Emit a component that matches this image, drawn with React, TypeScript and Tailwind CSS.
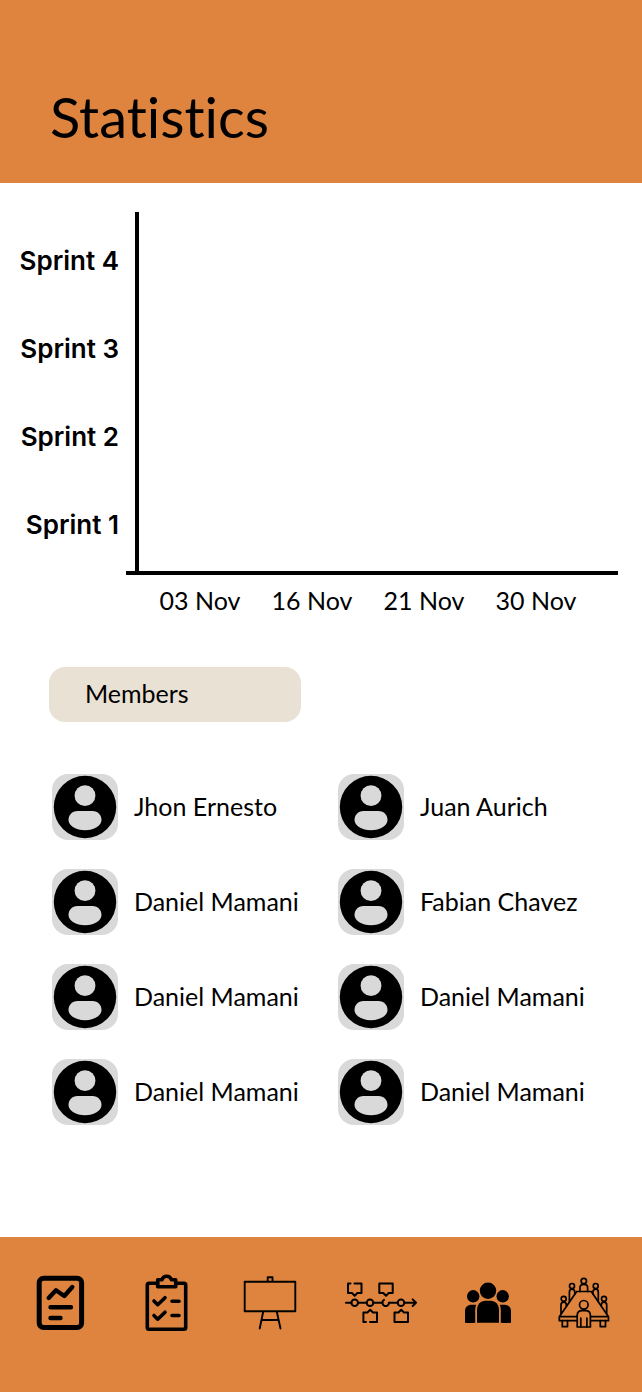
import type { ReactNode } from 'react';

const sprints = ['Sprint 4', 'Sprint 3', 'Sprint 2', 'Sprint 1'];
const dates = ['03 Nov', '16 Nov', '21 Nov', '30 Nov'];
const members = [
  'Jhon Ernesto',
  'Juan Aurich',
  'Daniel Mamani',
  'Fabian Chavez',
  'Daniel Mamani',
  'Daniel Mamani',
  'Daniel Mamani',
  'Daniel Mamani',
];

function Avatar() {
  return (
    <span className="block size-[66px] shrink-0 rounded-2xl bg-[#d9d9d9]">
      <svg viewBox="0 0 66 66" className="size-full" aria-hidden="true">
        <circle cx="33" cy="33" r="31.2" fill="#000" />
        <circle cx="33" cy="21.7" r="10.4" fill="#d9d9d9" />
        <path d="M25.500 37H40.500C46 37 49.500 41 49.500 46C49.500 51.500 42 56.200 33 56.200S16.500 51.500 16.500 46C16.500 41 20 37 25.500 37Z" fill="#d9d9d9" />
      </svg>
    </span>
  );
}

function Glyph({ width = 60, stroke, children }: { width?: number; stroke: number; children: ReactNode }) {
  return (
    <svg
      width={width}
      height={60}
      viewBox={`0 0 ${width} 60`}
      fill="none"
      stroke="#000"
      strokeWidth={stroke}
      strokeLinecap="round"
      strokeLinejoin="round"
      aria-hidden="true"
    >
      {children}
    </svg>
  );
}

function ReportIcon() {
  return (
    <Glyph stroke={4.4}>
      <rect x="9.200" y="5.200" width="42.400" height="49.400" rx="4.500" strokeWidth="5" />
      <path d="M18.700 25L26 17.300L34.300 23L42.300 14M20.500 34.300H41M20.500 45H30.500" />
    </Glyph>
  );
}

function ChecklistIcon() {
  return (
    <Glyph stroke={3.6}>
      <path d="M21.700 10.300H13Q11.300 10.300 11.300 12V54.500Q11.300 56.300 13 56.300H48Q49.700 56.300 49.700 54.500V12Q49.700 10.300 48 10.300H39.700" />
      <path d="M21.700 13.700V6.700H26C26.700 4.300 28.300 3.200 30.700 3.200S34.700 4.300 35.400 6.700H39.700V13.700Z" />
      <path d="M18 28L21.700 31.700L29 24.700M18 42.500L21.700 46.200L29 39.200M36 28.300H43M36 42.500H43" />
    </Glyph>
  );
}

function BoardIcon() {
  return (
    <Glyph stroke={1.9}>
      <path d="M4.700 8.700H55.300V38.300H4.700ZM27.700 8.700V4.300H32.500V8.700M23.300 38.300L19.700 55.500M36.700 38.300L40.500 55.500M22 47H38.500" />
    </Glyph>
  );
}

function TimelineIcon() {
  return (
    <Glyph width={72} stroke={2}>
      <path d="M0.900 29.700H6.400M13 29.700H21.700M28.300 29.700H37.400M44 29.700H52.700M59.300 29.700H71M67.700 26.400L71 29.700L67.700 33" />
      <circle cx="9.700" cy="29.700" r="3.300" />
      <circle cx="25" cy="29.700" r="3.300" />
      <circle cx="56" cy="29.700" r="3.300" />
      <path d="M39 26.900A3.300 3.300 0 1 0 44 29.700" />
      <path d="M5.500 10.500H3V20H7L9.700 22.700L12.400 20H16.500V10.500H9.500" />
      <path d="M34.300 10.500H47.700V20H43.700L41 22.700L38.300 20H34.300Z" />
      <path d="M21 49H18.400V39.500H22.400L25.200 36.800L28 39.500H32V49H25" />
      <path d="M49.500 49V39.500H53.500L56.200 36.800L59 39.500H63V49Z" />
    </Glyph>
  );
}

function TeamIcon() {
  return (
    <Glyph stroke={0}>
      <g fill="#000">
        <circle cx="30" cy="17.800" r="8.200" />
        <circle cx="15.200" cy="23.300" r="6.200" />
        <circle cx="44.700" cy="23.300" r="6.200" />
        <path d="M19 49.700V37C19 31.500 22.500 27.700 27.500 27.700H32.500C37.500 27.700 41 31.500 41 37V49.700Z" />
        <path d="M7 49.700V38C7 34 9.700 31.700 13.500 31.700H18.200Q17.200 34 17.200 37V49.700Q12 50.200 7 49.700Z" />
        <path d="M53 49.700V38C53 34 50.300 31.700 46.500 31.700H41.800Q42.800 34 42.800 37V49.700Q48 50.200 53 49.700Z" />
      </g>
    </Glyph>
  );
}

function MeetingIcon() {
  return (
    <Glyph stroke={1.7}>
      <path d="M22.700 18.500H37.300L54.500 43.700V47.700H5.300V43.700ZM5.300 43.700H54.500" />
      <path d="M8.300 47.700V53.700H13.500V47.700M46.300 47.700V53.700H51.500V47.700" />
      <circle cx="29.800" cy="8" r="2.700" />
      <path d="M26 18.500V14.500Q26 11.300 29.800 11.300T33.600 14.500V18.500" />
      <circle cx="18" cy="13" r="2.500" />
      <path d="M15.400 28.500V19Q15.400 16.200 18 16.200T20.800 19V21" />
      <circle cx="41.700" cy="13" r="2.500" />
      <path d="M44.300 28.500V19Q44.300 16.200 41.700 16.200T38.900 19V21" />
      <circle cx="9.700" cy="25.800" r="2.500" />
      <path d="M7 40.500V32Q7 29.200 9.700 29.200T12.400 32V33" />
      <circle cx="50" cy="25.800" r="2.500" />
      <path d="M52.700 40.500V32Q52.700 29.200 50 29.200T47.300 32V33" />
      <circle cx="29.800" cy="31.800" r="4.300" fill="#de843e" />
      <path d="M23.200 54V42.500Q23.200 37.600 28 37.600H31.600Q36.400 37.600 36.400 42.500V54Z" fill="#de843e" />
      <path d="M26.800 45V54M32.900 45V54" />
    </Glyph>
  );
}

const tabs = [
  { label: 'Statistics', icon: <ReportIcon /> },
  { label: 'Tasks', icon: <ChecklistIcon /> },
  { label: 'Board', icon: <BoardIcon /> },
  { label: 'Timeline', icon: <TimelineIcon /> },
  { label: 'Team', icon: <TeamIcon /> },
  { label: 'Meetings', icon: <MeetingIcon /> },
];

export default function App() {
  return (
    <div className="flex min-h-screen flex-col bg-white font-[Lato,sans-serif] text-black [font-variant-ligatures:none]">
      <header className="bg-[#de843e] px-[50px] pt-[85px] pb-[34px]">
        <h1 className="text-[56px] leading-[64px]">Statistics</h1>
      </header>

      <main className="flex-1 pb-28">
        <section aria-label="Sprint chart" className="pt-[29px] pr-6">
          <div className="flex">
            <ul className="w-[135px] shrink-0 pt-1 pr-4 pb-[3px] text-right font-[Inter,sans-serif] text-[26px] font-semibold">
              {sprints.map((sprint) => (
                <li key={sprint} className="flex h-[88px] items-center justify-end whitespace-nowrap">
                  {sprint}
                </li>
              ))}
            </ul>
            <div className="flex-1 border-l-4 border-black" />
          </div>
          <div className="ml-[126px] border-t-4 border-black pt-[9px] pr-[26px] pl-[18px]">
            <ul className="grid grid-cols-4 text-center text-[25px] leading-8">
              {dates.map((date) => (
                <li key={date} className="whitespace-nowrap">{date}</li>
              ))}
            </ul>
          </div>
        </section>

        <section className="mt-[51px] pr-[18px]">
          <h2 className="ml-[49px] w-[252px] rounded-2xl bg-[#e9e1d4] px-9 pt-2.5 pb-[13px] text-[25px] leading-8">
            Members
          </h2>
          <ul className="mt-[52px] ml-[52px] grid grid-cols-2 gap-y-[29px]">
            {members.map((name, index) => (
              <li key={index} className="flex items-center gap-4 text-[25px] leading-8 whitespace-nowrap">
                <Avatar />
                <span className="pb-0.5">{name}</span>
              </li>
            ))}
          </ul>
        </section>
      </main>

      <nav aria-label="Main" className="grid grid-cols-[106fr_106fr_102fr_120fr_94fr_98fr] bg-[#de843e] pt-9 pr-[9px] pb-[59px] pl-[7px]">
        {tabs.map((tab) => (
          <a key={tab.label} href="#" aria-label={tab.label} className="flex justify-center">
            {tab.icon}
          </a>
        ))}
      </nav>
    </div>
  );
}
